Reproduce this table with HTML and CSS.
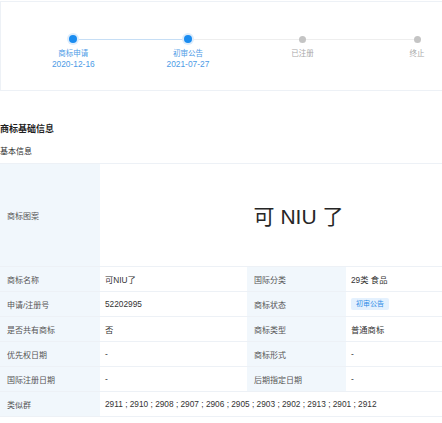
FILE: index.html
```html
<!DOCTYPE html>
<html>
<head>
<meta charset="utf-8">
<link rel="stylesheet" href="styles.css">
</head>
<body>
<div class="page">
  <div class="progress-card">
    <div class="steps">
      <div class="step done">
        <div class="dot-row"><span class="dot"></span></div>
        <div class="step-title">商标申请</div>
        <div class="step-date">2020-12-16</div>
      </div>
      <div class="step done current">
        <div class="dot-row"><span class="dot"></span></div>
        <div class="step-title">初审公告</div>
        <div class="step-date">2021-07-27</div>
      </div>
      <div class="step">
        <div class="dot-row"><span class="dot"></span></div>
        <div class="step-title">已注册</div>
      </div>
      <div class="step last">
        <div class="dot-row"><span class="dot"></span></div>
        <div class="step-title">终止</div>
      </div>
    </div>
  </div>

  <h2 class="section-title">商标基础信息</h2>
  <div class="sub-title">基本信息</div>

  <table class="info-table">
    <colgroup>
      <col class="c-label">
      <col class="c-value">
      <col class="c-label2">
      <col class="c-value2">
    </colgroup>
    <tr class="img-row">
      <td class="label">商标图案</td>
      <td class="value img-cell" colspan="3"><span class="mark">可 NIU 了</span></td>
    </tr>
    <tr>
      <td class="label">商标名称</td>
      <td class="value">可NIU了</td>
      <td class="label">国际分类</td>
      <td class="value">29类 食品</td>
    </tr>
    <tr>
      <td class="label">申请/注册号</td>
      <td class="value">52202995</td>
      <td class="label">商标状态</td>
      <td class="value"><span class="badge">初审公告</span></td>
    </tr>
    <tr>
      <td class="label">是否共有商标</td>
      <td class="value">否</td>
      <td class="label">商标类型</td>
      <td class="value">普通商标</td>
    </tr>
    <tr>
      <td class="label">优先权日期</td>
      <td class="value">-</td>
      <td class="label">商标形式</td>
      <td class="value">-</td>
    </tr>
    <tr>
      <td class="label">国际注册日期</td>
      <td class="value">-</td>
      <td class="label">后期指定日期</td>
      <td class="value">-</td>
    </tr>
    <tr>
      <td class="label">类似群</td>
      <td class="value" colspan="3">2911 ; 2910 ; 2908 ; 2907 ; 2906 ; 2905 ; 2903 ; 2902 ; 2913 ; 2901 ; 2912</td>
    </tr>
  </table>
</div>
</body>
</html>
```

FILE: styles.css
```css
html, body {
  margin: 0;
  padding: 0;
  background: #ffffff;
  overflow: hidden;
}

body {
  font-family: "Liberation Sans", "Noto Sans CJK SC", sans-serif;
  color: #333333;
}

.page {
  width: 492px;
}

.progress-card {
  margin-top: 1px;
  border: 1px solid #edf1f6;
  box-sizing: border-box;
  height: 90px;
  padding: 30px 0 0 15px;
}

.steps {
  display: flex;
}

.step {
  width: 114.6px;
  display: flex;
  flex-direction: column;
  align-items: center;
  position: relative;
}

.dot-row {
  height: 14px;
  width: 100%;
  display: flex;
  justify-content: center;
  align-items: center;
  position: relative;
}

.dot-row::after {
  content: "";
  position: absolute;
  left: 50%;
  width: 100%;
  top: 7px;
  height: 1px;
  background: #eeeeee;
  z-index: 0;
}

.step.done .dot-row::after {
  background: #c6def5;
}

.step.current .dot-row::after {
  background: #eeeeee;
}

.step.last .dot-row::after {
  display: none;
}

.dot {
  width: 7px;
  height: 7px;
  border-radius: 50%;
  background: #c4c4c4;
  position: relative;
  z-index: 1;
}

.step.done .dot {
  width: 8px;
  height: 8px;
  background: #1a8cf0;
  box-shadow: 0 0 0 2px #dcecfc;
}

.step-title {
  margin-top: 2px;
  font-size: 7.5px;
  line-height: 11px;
  color: #a8a8a8;
}

.step.done .step-title,
.step-date {
  color: #4d9be6;
}

.step-date {
  font-size: 8.4px;
  line-height: 11px;
}

.section-title {
  margin: 32px 0 0 0;
  font-size: 9px;
  line-height: 12px;
  font-weight: bold;
  color: #1f1f1f;
}

.sub-title {
  margin-top: 11px;
  font-size: 8px;
  line-height: 11px;
  color: #2b2b2b;
}

.info-table {
  margin-top: 6px;
  width: 492px;
  border-collapse: collapse;
  table-layout: fixed;
  font-size: 8px;
}

.c-label { width: 100px; }
.c-value { width: 147px; }
.c-label2 { width: 99px; }
.c-value2 { width: 146px; }

.info-table td {
  border-top: 1px solid #edf1f6;
  border-bottom: 1px solid #edf1f6;
  height: 24px;
  padding: 0;
  vertical-align: middle;
  white-space: nowrap;
}

.info-table td.label {
  background: #f1f7fc;
  color: #555555;
  padding-left: 7px;
}

.info-table td.value {
  color: #333333;
  padding-left: 5px;
  font-size: 8.3px;
}

.img-row td {
  height: 102px;
}

.img-cell {
  text-align: center;
}

.info-table td.img-cell {
  font-size: 21px;
}

.mark {
  color: #262626;
  font-family: "Liberation Sans", "Noto Sans CJK SC", sans-serif;
}

.badge {
  display: inline-block;
  background: #e4f1fe;
  color: #2a8ae6;
  font-size: 7px;
  line-height: 12px;
  padding: 0 5px;
  border-radius: 2px;
}
```
